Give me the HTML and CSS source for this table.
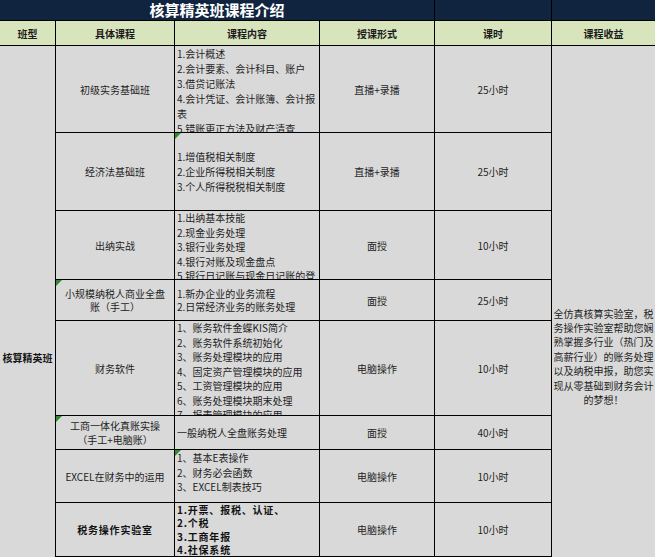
FILE: index.html
```html
<!DOCTYPE html>
<html lang="zh-CN">
<head>
<meta charset="utf-8">
<title>核算精英班课程介绍</title>
<link rel="stylesheet" href="styles.css">
</head>
<body>
<div class="viewport">
  <div class="sheet">
    <div class="cell title">核算精英班课程介绍</div>
    <div class="cell title-blank"></div>
    <div class="cell title-blank"></div>

    <div class="cell head">班型</div>
    <div class="cell head">具体课程</div>
    <div class="cell head">课程内容</div>
    <div class="cell head">授课形式</div>
    <div class="cell head">课时</div>
    <div class="cell head">课程收益</div>

    <div class="cell type"><div class="type-text">核算精英班</div></div>
    <div class="cell benefit"><div class="benefit-text">全仿真核算实验室，税<br>务操作实验室帮助您娴<br>熟掌握多行业（热门及<br>高薪行业）的账务处理<br>以及纳税申报，助您实<br>现从零基础到财务会计<br>的梦想！</div></div>

    <!-- row 1 -->
    <div class="cell">初级实务基础班</div>
    <div class="cell content top"><div>1.会计概述<br>2.会计要素、会计科目、账户<br>3.借贷记账法<br>4.会计凭证、会计账簿、会计报<br>表<br>5.错账更正方法及财产清查</div></div>
    <div class="cell">直播+录播</div>
    <div class="cell">25小时</div>

    <!-- row 2 -->
    <div class="cell">经济法基础班</div>
    <div class="cell content"><i class="flag"></i><div>1.增值税相关制度<br>2.企业所得税相关制度<br>3.个人所得税税相关制度</div></div>
    <div class="cell">直播+录播</div>
    <div class="cell">25小时</div>

    <!-- row 3 -->
    <div class="cell">出纳实战</div>
    <div class="cell content top lh145"><div>1.出纳基本技能<br>2.现金业务处理<br>3.银行业务处理<br>4.银行对账及现金盘点<br>5.银行日记账与现金日记账的登</div></div>
    <div class="cell">面授</div>
    <div class="cell">10小时</div>

    <!-- row 4 -->
    <div class="cell lh135"><i class="flag"></i><div>小规模纳税人商业全盘<br>账（手工）</div></div>
    <div class="cell content lh135"><div>1.新办企业的业务流程<br>2.日常经济业务的账务处理</div></div>
    <div class="cell">面授</div>
    <div class="cell">25小时</div>

    <!-- row 5 -->
    <div class="cell">财务软件</div>
    <div class="cell content top lh145"><div>1、账务软件金蝶KIS简介<br>2、账务软件系统初始化<br>3、账务处理模块的应用<br>4、固定资产管理模块的应用<br>5、工资管理模块的应用<br>6、账务处理模块期末处理<br>7、报表管理模块的应用</div></div>
    <div class="cell">电脑操作</div>
    <div class="cell">10小时</div>

    <!-- row 6 -->
    <div class="cell lh14"><i class="flag"></i><div>工商一体化真账实操<br>（手工+电脑账）</div></div>
    <div class="cell content">一般纳税人全盘账务处理</div>
    <div class="cell">面授</div>
    <div class="cell">40小时</div>

    <!-- row 7 -->
    <div class="cell">EXCEL在财务中的运用</div>
    <div class="cell content lh145 raise"><i class="flag"></i><div>1、基本E表操作<br>2、财务必会函数<br>3、EXCEL制表技巧</div></div>
    <div class="cell">电脑操作</div>
    <div class="cell">10小时</div>

    <!-- row 8 -->
    <div class="cell strong">税务操作实验室</div>
    <div class="cell content strong lh133"><div>1.开票、报税、认证、<br>2.个税<br>3.工商年报<br>4.社保系统</div></div>
    <div class="cell">电脑操作</div>
    <div class="cell">10小时</div>

    <!-- continuation below the window -->
    <div class="cell"></div>
    <div class="cell"></div>
    <div class="cell"></div>
    <div class="cell"></div>
  </div>
</div>
</body>
</html>
```

FILE: styles.css
```css
html, body {
  margin: 0;
  padding: 0;
  background: #d9d9d9;
}

.viewport {
  width: 655px;
  height: 557px;
  overflow: hidden;
}

.sheet {
  display: grid;
  grid-template-columns: 55px 118px 144px 114px 116px 103px;
  grid-template-rows: 20px 24px 86px 77px 68px 40px 94px 33px 52px 53px 111px;
  gap: 1px;
  background: #000;
  font-family: "Noto Sans CJK SC", "Microsoft YaHei", sans-serif;
  font-size: 10px;
  line-height: 15px;
  color: #1e1e1e;
}

.cell {
  position: relative;
  display: flex;
  align-items: center;
  justify-content: center;
  text-align: center;
  background: #d9d9d9;
  overflow: hidden;
  white-space: nowrap;
}

.title {
  grid-row: 1;
  grid-column: 1 / 5;
  background: #10243f;
  color: #ffffff;
  font-size: 15px;
  font-weight: 700;
  line-height: 20px;
}

.title-blank {
  background: #10243f;
}

.head {
  background: #d8e4bc;
  font-weight: 700;
  color: #1a1a1a;
}

.type {
  grid-column: 1;
  grid-row: 3 / 12;
}

.type-text {
  font-weight: 700;
  color: #151515;
}

.benefit {
  grid-column: 6;
  grid-row: 3 / 12;
}

.benefit-text {
  line-height: 14.4px;
  text-align: center;
}

.content {
  justify-content: flex-start;
  text-align: left;
  padding-left: 2px;
}

.top {
  align-items: flex-start;
}

.lh145 { line-height: 14.5px; }
.lh14 { line-height: 14px; }
.lh135 { line-height: 13.5px; }
.lh133 { line-height: 13.3px; }

.raise {
  padding-bottom: 6px;
  box-sizing: border-box;
}

.strong {
  font-weight: 700;
  letter-spacing: 0.8px;
  color: #111;
}

.flag {
  position: absolute;
  top: 0;
  left: 0;
  width: 0;
  height: 0;
  border-top: 6px solid #2e8b2e;
  border-right: 6px solid transparent;
}
```
